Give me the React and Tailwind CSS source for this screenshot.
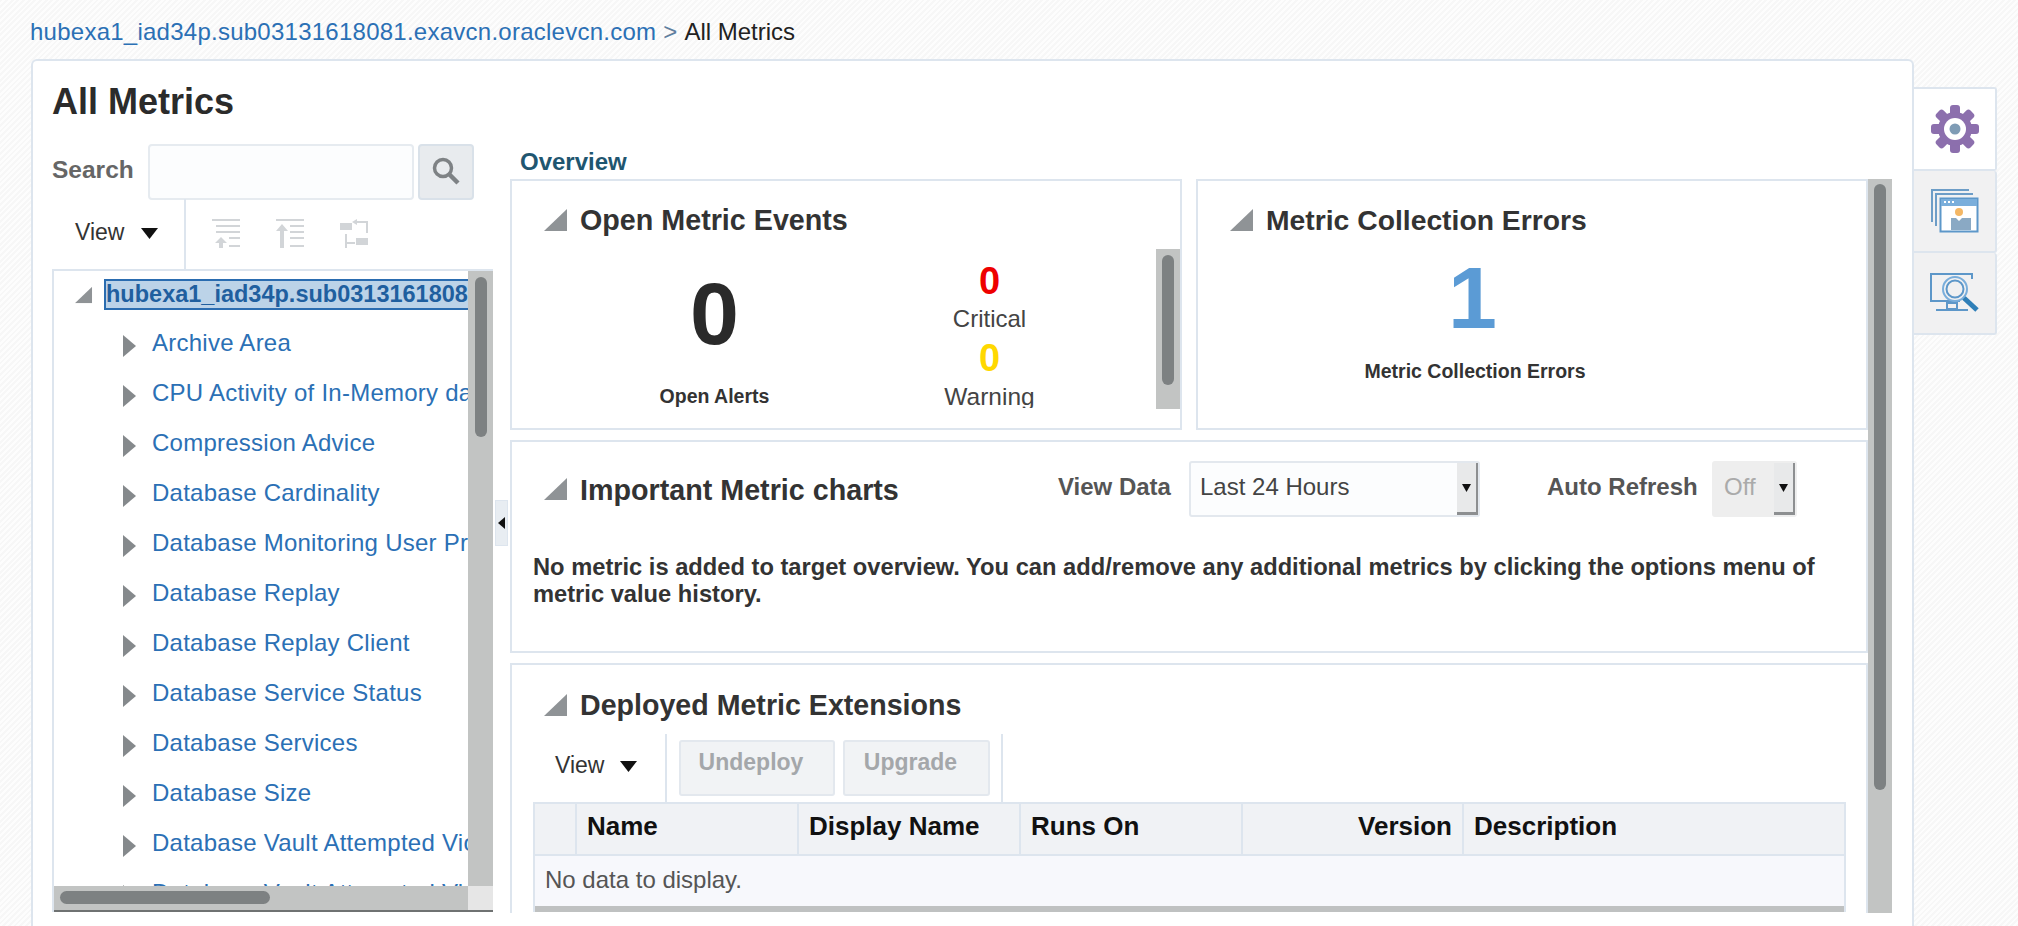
import React from 'react';

const FONT = "[font-family:'Liberation_Sans',Arial,sans-serif]";

const treeItems = [
  'Archive Area',
  'CPU Activity of In-Memory database',
  'Compression Advice',
  'Database Cardinality',
  'Database Monitoring User Privileges',
  'Database Replay',
  'Database Replay Client',
  'Database Service Status',
  'Database Services',
  'Database Size',
  'Database Vault Attempted Violations',
  'Database Vault Attempted Violations',
];

const columns = [
  { name: '', width: 'w-[42px]' },
  { name: 'Name', width: 'w-[222px]' },
  { name: 'Display Name', width: 'w-[222px]' },
  { name: 'Runs On', width: 'w-[222px]' },
  { name: 'Version', width: 'w-[221px]', right: true },
  { name: 'Description', width: 'flex-1' },
];

function Corner({ className = '' }) {
  return (
    <svg width="23" height="22" viewBox="0 0 23 22" className={`shrink-0 ${className}`}>
      <path d="M23 0V22H0Z" fill="#8f9396" />
    </svg>
  );
}

function RightArrow() {
  return (
    <svg width="13" height="22" viewBox="0 0 13 22" className="shrink-0">
      <path d="M0 0L13 11L0 22Z" fill="#85898c" />
    </svg>
  );
}

function DownArrow() {
  return (
    <svg width="17" height="11" viewBox="0 0 17 11" className="shrink-0">
      <path d="M0 0H17L8.5 11Z" fill="#111" />
    </svg>
  );
}

function CollapseIcon() {
  return (
    <svg width="28" height="30" viewBox="0 0 28 30" fill="#d2d5d8">
      <rect x="0" y="0" width="28" height="2" />
      <rect x="4" y="6" width="24" height="2" />
      <rect x="4" y="12" width="24" height="2" />
      <rect x="17" y="18" width="11" height="2" />
      <rect x="17" y="26" width="11" height="2" />
      <path d="M9 18L15 24H11V29H7V24H3Z" />
    </svg>
  );
}

function ExpandIcon() {
  return (
    <svg width="28" height="30" viewBox="0 0 28 30" fill="#d2d5d8">
      <rect x="0" y="0" width="28" height="2" />
      <rect x="14" y="6" width="14" height="2" />
      <rect x="14" y="12" width="14" height="2" />
      <rect x="14" y="18" width="14" height="2" />
      <rect x="14" y="26" width="14" height="2" />
      <path d="M6 5L12 12H8V29H4V12H0Z" />
    </svg>
  );
}

function MoveIcon() {
  return (
    <svg width="28" height="30" viewBox="0 0 28 30" fill="#d2d5d8">
      <rect x="0" y="4" width="12" height="7" />
      <rect x="16" y="19" width="12" height="7" />
      <path d="M5 15h2v8h8v2H7v4H5Z" />
      <path d="M14 2h14v12h-2V4H14Z" />
      <path d="M17 0v6l-5-3Z" />
    </svg>
  );
}

function GearIcon() {
  const teeth = [0, 45, 90, 135, 180, 225, 270, 315];
  return (
    <svg width="48" height="48" viewBox="0 0 48 48">
      {teeth.map((a) => (
        <rect key={a} x="19" y="0" width="10" height="14" rx="3" fill="#8c6fad" transform={`rotate(${a} 24 24)`} />
      ))}
      <circle cx="24" cy="24" r="17" fill="#8c6fad" />
      <circle cx="24" cy="24" r="11" fill="#fff" />
      <circle cx="24" cy="24" r="5.5" fill="#7f9cb5" />
    </svg>
  );
}

function WindowsIcon() {
  return (
    <svg width="48" height="44" viewBox="0 0 48 44" fill="none">
      <path d="M1 33V1H38" stroke="#6d9dc7" strokeWidth="2" />
      <path d="M5 37V5H42" stroke="#6d9dc7" strokeWidth="2" />
      <rect x="9.5" y="9.5" width="37" height="33" fill="#fff" stroke="#5d97c9" strokeWidth="2" />
      <rect x="10" y="10" width="36" height="7" fill="#7aaedb" />
      <rect x="13" y="12" width="2" height="2" fill="#fff" />
      <rect x="17" y="12" width="2" height="2" fill="#fff" />
      <rect x="21" y="12" width="2" height="2" fill="#fff" />
      <circle cx="28" cy="23" r="4" fill="#f4b765" />
      <path d="M20 29H25L28 32L31 29H40V41H20Z" fill="#8aa9c4" />
    </svg>
  );
}

function MonitorSearchIcon() {
  return (
    <svg width="50" height="40" viewBox="0 0 50 40" fill="none">
      <path d="M30 28H1V1H42V6" stroke="#5d97c9" strokeWidth="2" />
      <path d="M6 37H38" stroke="#5d97c9" strokeWidth="2" />
      <rect x="17" y="30" width="10" height="6" stroke="#5d97c9" strokeWidth="2" />
      <circle cx="25" cy="16" r="12" stroke="#7aaedb" strokeWidth="2" />
      <circle cx="25" cy="16" r="8.5" stroke="#5d97c9" strokeWidth="2" />
      <path d="M34 25L47 37" stroke="#2f7fb8" strokeWidth="5" />
    </svg>
  );
}

function Select({ label, value, disabled, className, labelClass }) {
  return (
    <div className={`flex items-center ${className}`}>
      <span className={`pb-[4px] text-[24px] font-bold text-[#555] ${labelClass}`}>{label}</span>
      <div
        className={`h-[56px] flex items-center justify-between rounded-[3px] border-2 ${
          disabled ? 'w-[85px] border-[#eeeeee] bg-[#eeeeee] text-[#aaa] pl-[10px]' : 'w-[291px] border-[#e3e8ee] bg-[#fcfdfe] text-[#444] pl-[9px]'
        } text-[24px]`}
      >
        <span className="pb-[4px]">{value}</span>
        <div className="w-[21px] h-full bg-[#e8e9ea] border-r-2 border-b-[3px] border-[#8d8f91] flex items-center justify-center">
          <svg width="9" height="8" viewBox="0 0 9 8">
            <path d="M0 0H9L4.5 8Z" fill="#111" />
          </svg>
        </div>
      </div>
    </div>
  );
}

export default function App() {
  return (
    <div className={`${FONT} h-[926px] w-[2018px] overflow-hidden bg-[repeating-linear-gradient(135deg,#f7f7f7_0,#f7f7f7_2px,#fdfdfd_2px,#fdfdfd_4px)]`}>
      <div className="h-[59px] pl-[30px] pt-[16px] text-[24px] leading-[32px] tracking-[0.25px] text-[#5f7f9f]">
        <span className="text-[#2b70b5]">hubexa1_iad34p.sub03131618081.exavcn.oraclevcn.com</span>
        <span> &gt; </span>
        <span className="text-[#222] tracking-normal">All Metrics</span>
      </div>

      <div className="flex items-start pl-[31px]">
        <div className="w-[1883px] h-[867px] bg-white border-2 border-b-0 border-[#dde5ee] rounded-t-[6px] pl-[19px] overflow-hidden">
          <h1 className="h-[84px] pt-[19px] text-[36px] leading-[44px] font-bold text-[#2b2b2b]">All Metrics</h1>

          <div className="flex">
            {/* left tree */}
            <div className="w-[441px] shrink-0">
              <div className="flex items-center h-[54px]">
                <span className="w-[96px] pb-[3px] text-[24.5px] font-bold text-[#666]">Search</span>
                <div className="w-[266px] h-[56px] rounded-[4px] border-2 border-[#e6ebf0] bg-[#fcfdfe]" />
                <div className="ml-[4px] w-[56px] h-[56px] rounded-[4px] border-2 border-[#d9e1e9] bg-[#e8ebee] flex items-center justify-center">
                  <svg width="28" height="30" viewBox="0 0 28 30" fill="none">
                    <circle cx="11" cy="11" r="8.5" stroke="#7e8285" strokeWidth="3.5" />
                    <path d="M17 17L26 26" stroke="#7e8285" strokeWidth="4.5" />
                  </svg>
                </div>
              </div>

              <div className="flex h-[70px]">
                <div className="w-[134px] shrink-0 border-r-2 border-[#dde5ee] pl-[23px] pt-[16px] flex items-start gap-[17px] text-[23px] text-[#333]">
                  <span>View</span>
                  <span className="mt-[13px]"><DownArrow /></span>
                </div>
                <div className="flex gap-[36px] pl-[26px] pt-[20px]">
                  <CollapseIcon />
                  <ExpandIcon />
                  <MoveIcon />
                </div>
              </div>

              <div className="h-[643px] border-2 border-r-0 border-b-0 border-[#dde5ee] relative overflow-hidden">
                <div className="h-[615px] overflow-hidden pr-[25px] whitespace-nowrap tracking-[0.25px]">
                  <div className="flex items-center h-[47px] pl-[18px]">
                    <Corner className="scale-75" />
                    <div className="ml-[9px] flex-1 overflow-hidden h-[31px] bg-[#bcd3e8] border-2 border-[#2a6cb0] border-r-0 font-bold text-[23.5px] leading-[26px] tracking-normal text-[#1f5f9f]">
                      hubexa1_iad34p.sub03131618081.exavcn.oraclevcn.com
                    </div>
                  </div>
                  {treeItems.map((item, i) => (
                    <div key={i} className="flex items-center h-[50px] pl-[69px] gap-[16px] text-[24px] text-[#2b70b5]">
                      <span className="mt-[6px]"><RightArrow /></span>
                      <span>{item}</span>
                    </div>
                  ))}
                </div>
                {/* scrollbars */}
                <div className="absolute right-0 top-0 w-[25px] h-[615px] bg-[#c2c4c3]">
                  <div className="mx-auto mt-[6px] w-[12px] h-[160px] rounded-full bg-[#7d8182]" />
                </div>
                <div className="absolute left-0 right-0 top-[615px] h-[26px] bg-[#c2c4c3] border-b-2 border-[#6f7272] flex">
                  <div className="flex-1 pl-[6px] pt-[5px]">
                    <div className="w-[210px] h-[13px] rounded-full bg-[#7d8182]" />
                  </div>
                  <div className="w-[25px] bg-[#e6e6e6]" />
                </div>
              </div>
            </div>

            {/* splitter */}
            <div className="w-[17px] shrink-0 pt-[355px] flex justify-center">
              <div className="w-[13px] h-[46px] bg-[#e8edf2] border border-[#dde5ee] flex items-center justify-center">
                <svg width="7" height="12" viewBox="0 0 7 12">
                  <path d="M7 0V12L0 6Z" fill="#111" />
                </svg>
              </div>
            </div>

            {/* right pane */}
            <div className="w-[1382px] shrink-0">
              <div className="h-[34px] pl-[10px] text-[24px] leading-[34px] font-bold text-[#1f5670]">Overview</div>
              <div className="flex">
                <div className="w-[1358px] shrink-0 flex flex-col">
                  <div className="flex gap-[14px]">
                    <section className="w-[672px] h-[251px] border-2 border-[#dde5ee] relative overflow-hidden">
                      <div className="flex items-center gap-[13px] pl-[32px] pt-[22px]">
                        <Corner />
                        <h2 className="text-[28.7px] leading-[34px] font-bold text-[#333]">Open Metric Events</h2>
                      </div>
                      <div className="flex h-[171px] overflow-hidden">
                        <div className="w-[405px] flex flex-col items-center">
                          <span className="text-[88px] leading-[88px] font-bold text-[#2a2a2a] pt-[33px] box-content">0</span>
                          <span className="mt-[27px] text-[19.5px] leading-[22px] font-bold text-[#333]">Open Alerts</span>
                        </div>
                        <div className="w-[145px] flex flex-col items-center">
                          <span className="text-[38px] leading-[42px] font-bold text-[#ee0000] mt-[23px]">0</span>
                          <span className="mt-[1px] text-[24px] leading-[32px] text-[#444]">Critical</span>
                          <span className="mt-[1px] text-[38px] leading-[44px] font-bold text-[#ffd800]">0</span>
                          <span className="mt-[1px] text-[24.5px] leading-[32px] text-[#444]">Warning</span>
                        </div>
                      </div>
                      <div className="absolute right-0 top-[68px] w-[24px] h-[160px] bg-[#c2c4c3]">
                        <div className="mx-auto mt-[6px] w-[12px] h-[130px] rounded-full bg-[#7d8182]" />
                      </div>
                    </section>

                    <section className="w-[672px] h-[251px] border-2 border-[#dde5ee]">
                      <div className="flex items-center gap-[13px] pl-[32px] pt-[22px]">
                        <Corner />
                        <h2 className="text-[28.3px] leading-[34px] font-bold text-[#333]">Metric Collection Errors</h2>
                      </div>
                      <div className="flex flex-col items-center pr-[114px]">
                        <span className="mr-[5px] text-[88px] leading-[88px] font-bold text-[#5b9bd5] pt-[17px] box-content">1</span>
                        <span className="mt-[18px] text-[19.5px] leading-[22px] font-bold text-[#333]">Metric Collection Errors</span>
                      </div>
                    </section>
                  </div>

                  <section className="mt-[10px] h-[213px] border-2 border-[#dde5ee]">
                    <div className="flex items-start pl-[32px] pt-[19px]">
                      <Corner className="mt-[17px]" />
                      <h2 className="ml-[13px] mt-[12px] w-[478px] text-[28.7px] leading-[34px] font-bold text-[#333]">Important Metric charts</h2>
                      <Select label="View Data" value="Last 24 Hours" labelClass="w-[131px]" className="" />
                      <Select label="Auto Refresh" value="Off" disabled labelClass="w-[165px]" className="ml-[67px]" />
                    </div>
                    <p className="mt-[37px] ml-[21px] mr-[24px] text-[23.7px] leading-[27px] font-bold text-[#333]">
                      No metric is added to target overview. You can add/remove any additional metrics by clicking the options menu of metric value history.
                    </p>
                  </section>

                  <section className="mt-[10px] h-[250px] border-2 border-b-0 border-[#dde5ee] overflow-hidden">
                    <div className="flex items-center pl-[32px] pt-[23px] mb-[12px]">
                      <Corner />
                      <h2 className="ml-[13px] text-[28.6px] leading-[34px] font-bold text-[#333]">Deployed Metric Extensions</h2>
                    </div>
                    <div className="flex h-[68px] ml-[21px]">
                      <div className="w-[134px] border-r-2 border-[#dde5ee] pl-[22px] pt-[14px] flex items-start gap-[16px] text-[23px] text-[#333]">
                        <span>View</span>
                        <span className="mt-[13px]"><DownArrow /></span>
                      </div>
                      <div className="w-[336px] border-r-2 border-[#dde5ee] pl-[12px] pt-[6px] flex items-start gap-[8px]">
                        <div className="w-[156px] h-[56px] rounded-[3px] border-2 border-[#e3e8ee] bg-[#f1f3f5] pr-[12px] text-center font-bold text-[23px] leading-[40px] text-[#a4a7aa]">Undeploy</div>
                        <div className="w-[147px] h-[56px] rounded-[3px] border-2 border-[#e3e8ee] bg-[#f1f3f5] pr-[12px] text-center font-bold text-[23px] leading-[40px] text-[#a4a7aa]">Upgrade</div>
                      </div>
                    </div>
                    <div className="ml-[21px] w-[1313px] border-2 border-b-0 border-[#dde5ee]">
                      <div className="flex h-[52px] bg-[#f0f2f5] border-b-2 border-[#dde5ee]">
                        {columns.map((c, i) => (
                          <div
                            key={i}
                            className={`${c.width} flex items-center px-[10px] pb-[5px] text-[26px] font-bold text-[#111] ${i < columns.length - 1 ? 'border-r-2 border-[#dde5ee]' : ''} ${c.right ? 'justify-end' : ''}`}
                          >
                            {c.name}
                          </div>
                        ))}
                      </div>
                      <div className="h-[50px] bg-[#f7f8fc] pl-[10px] pb-[3px] flex items-center text-[24px] text-[#555]">No data to display.</div>
                      <div className="h-[6px] bg-[#bfc1c1]" />
                    </div>
                  </section>
                </div>

                <div className="w-[24px] h-[734px] bg-[#c2c4c3] shrink-0">
                  <div className="mx-auto mt-[5px] w-[12px] h-[606px] rounded-full bg-[#7d8182]" />
                </div>
              </div>
            </div>
          </div>
        </div>

        {/* side tabs */}
        <div className="mt-[28px] w-[83px] flex flex-col">
          <div className="h-[84px] bg-white border-2 border-l-0 border-[#dde5ee] rounded-r-[3px] flex items-center justify-center"><GearIcon /></div>
          <div className="h-[82px] bg-[#f1f1f2] border-2 border-t-0 border-l-0 border-[#dde5ee] rounded-r-[3px] flex items-center justify-center"><WindowsIcon /></div>
          <div className="h-[82px] bg-[#f1f1f2] border-2 border-t-0 border-l-0 border-[#dde5ee] rounded-r-[3px] flex items-center justify-center"><MonitorSearchIcon /></div>
        </div>
      </div>
    </div>
  );
}
